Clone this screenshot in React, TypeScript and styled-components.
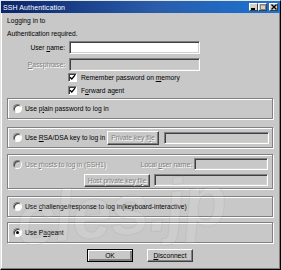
import styled, { createGlobalStyle, css } from 'styled-components';

const GlobalStyle = createGlobalStyle`
  body {
    margin: 0;
    background: #c8c8c8;
    font-family: "Liberation Sans", Arial, sans-serif;
  }
`;

const App = () => {
  return (
    <>
      <GlobalStyle />
      <Window>
        <TitleBar>
          <TitleText>SSH Authentication</TitleText>
          <TitleButtons>
            <CaptionButton>
              <svg width="5" height="5" viewBox="0 0 5 5">
                <rect x="0" y="3" width="4" height="2" fill="#000" />
              </svg>
            </CaptionButton>
            <CaptionButton $disabled>
              <svg width="6" height="6" viewBox="0 0 6 6">
                <rect x="0.5" y="0.5" width="5" height="5" fill="none" stroke="#808080" />
                <rect x="0" y="0" width="6" height="1.5" fill="#808080" />
              </svg>
            </CaptionButton>
            <CaptionButton $gap>
              <svg width="6" height="6" viewBox="0 0 6 6">
                <path d="M0.5 0.5 L5.5 5.5 M5.5 0.5 L0.5 5.5" stroke="#000" strokeWidth="1.4" />
              </svg>
            </CaptionButton>
          </TitleButtons>
        </TitleBar>

        <Content>
          <Line>Logging in to</Line>
          <Line>Authentication required.</Line>

          <FieldGrid>
            <FieldLabel>
              User <u>n</u>ame:
            </FieldLabel>
            <TextBox $width={131} $height={13} />
            <FieldLabel $disabled>
              <u>P</u>assphrase:
            </FieldLabel>
            <TextBox $width={131} $height={13} $disabled />
          </FieldGrid>

          <CheckRow>
            <CheckBox>
              <svg width="7" height="7" viewBox="0 0 7 7">
                <path d="M1 3.2 L2.8 5 L6 1.2" stroke="#000" strokeWidth="1.3" fill="none" />
              </svg>
            </CheckBox>
            <span>
              Remember password on <u>m</u>emory
            </span>
          </CheckRow>
          <CheckRow>
            <CheckBox>
              <svg width="7" height="7" viewBox="0 0 7 7">
                <path d="M1 3.2 L2.8 5 L6 1.2" stroke="#000" strokeWidth="1.3" fill="none" />
              </svg>
            </CheckBox>
            <span>
              F<u>o</u>rward agent
            </span>
          </CheckRow>

          <Group $mt={1} $h={21}>
            <RadioLabel>
              <Radio />
              <span>
                Use p<u>l</u>ain password to log in
              </span>
            </RadioLabel>
          </Group>

          <Group $mt={8} $h={21}>
            <RadioLabel>
              <Radio />
              <span>
                Use <u>R</u>SA/DSA key to log in
              </span>
            </RadioLabel>
            <PushButton $width={52} $height={14} $disabled>
              Private key fi<u>l</u>e
            </PushButton>
            <TextBox $width={105} $height={12} $disabled $ml={5} />
          </Group>

          <StackGroup $mt={6} $h={35}>
            <GroupRow>
              <RadioLabel $disabled>
                <Radio $disabled />
                <span>
                  Use <u>r</u>hosts to log in (SSH1)
                </span>
              </RadioLabel>
              <FieldLabel $disabled>
                Local <u>u</u>ser name:
              </FieldLabel>
              <TextBox $width={74} $height={12} $disabled $ml={2} />
            </GroupRow>
            <GroupRow $end>
              <PushButton $width={66} $height={13} $disabled>
                Host private key fi<u>l</u>e
              </PushButton>
              <TextBox $width={114} $height={12} $disabled $ml={4} />
            </GroupRow>
          </StackGroup>

          <Group $mt={7} $h={21}>
            <RadioLabel>
              <Radio />
              <span>
                Use <u>c</u>hallenge/response to log in(keyboard-interactive)
              </span>
            </RadioLabel>
          </Group>

          <Group $mt={5} $h={21}>
            <RadioLabel>
              <Radio $checked />
              <span>
                Use P<u>a</u>geant
              </span>
            </RadioLabel>
          </Group>

          <ButtonRow>
            <PushButton $width={46} $height={13} $default>
              OK
            </PushButton>
            <PushButton $width={46} $height={13}>
              <u>D</u>isconnect
            </PushButton>
          </ButtonRow>
        </Content>

        <Watermark>cles.jp</Watermark>
      </Window>
    </>
  );
};

const disabledText = css`
  color: #808080;
  text-shadow: 1px 1px 0 #ffffff;
`;

const Window = styled.div`
  position: relative;
  width: 281px;
  height: 270px;
  box-sizing: border-box;
  background: #c8c8c8;
  border: 1px solid;
  border-color: #e4e4e4 #000000 #000000 #e4e4e4;
  box-shadow: inset -1px -1px 0 #808080, inset 1px 1px 0 #ffffff;
  overflow: hidden;
  font-size: 6.7px;
  color: #000;
`;

const TitleBar = styled.div`
  height: 12px;
  margin: 0 0 0 0;
  padding: 0 2px 0 2px;
  display: flex;
  align-items: center;
  justify-content: space-between;
  background: linear-gradient(90deg, #0a246a 0%, #2a5caa 55%, #1a73d4 100%);
`;

const TitleText = styled.span`
  color: #ffffff;
  font-size: 7px;
  letter-spacing: 0.1px;
`;

const TitleButtons = styled.div`
  display: flex;
  align-items: center;
`;

const CaptionButton = styled.div<{ $gap?: boolean; $disabled?: boolean }>`
  width: 9px;
  height: 8px;
  box-sizing: border-box;
  display: flex;
  align-items: center;
  justify-content: center;
  background: #d4d0c8;
  border: 1px solid;
  border-color: #ffffff #404040 #404040 #ffffff;
  margin-left: ${({ $gap }) => ($gap ? '2px' : '0')};
`;

const Content = styled.div`
  padding: 1px 7px 0 6px;
`;

const Line = styled.div`
  height: 13px;
  line-height: 13px;
  white-space: nowrap;
`;

const FieldGrid = styled.div`
  display: grid;
  grid-template-columns: 58px auto;
  column-gap: 4px;
  row-gap: 4px;
  margin-top: 1px;
  align-items: center;
`;

const FieldLabel = styled.span<{ $disabled?: boolean }>`
  text-align: right;
  white-space: nowrap;
  ${({ $disabled }) => $disabled && disabledText}
`;

const TextBox = styled.div<{ $width: number; $height: number; $disabled?: boolean; $ml?: number }>`
  width: ${({ $width }) => $width}px;
  height: ${({ $height }) => $height}px;
  flex-shrink: 0;
  box-sizing: border-box;
  margin-left: ${({ $ml }) => $ml ?? 0}px;
  background: ${({ $disabled }) => ($disabled ? '#c8c8c8' : '#ffffff')};
  border: 1px solid;
  border-color: #808080 #ffffff #ffffff #808080;
  box-shadow: inset 1px 1px 0 #404040, inset -1px -1px 0 #d4d0c8;
`;

const CheckRow = styled.div`
  height: 13px;
  margin-left: 61px;
  display: flex;
  align-items: center;
  gap: 4px;
  white-space: nowrap;
  &:first-of-type {
    margin-top: 1px;
  }
`;

const CheckBox = styled.div`
  width: 9px;
  height: 9px;
  box-sizing: border-box;
  display: flex;
  align-items: center;
  justify-content: center;
  background: #ffffff;
  border: 1px solid;
  border-color: #808080 #ffffff #ffffff #808080;
  box-shadow: inset 1px 1px 0 #404040;
`;

const Group = styled.div<{ $mt: number; $h: number }>`
  margin-top: ${({ $mt }) => $mt}px;
  height: ${({ $h }) => $h}px;
  box-sizing: border-box;
  border: 1px solid #808080;
  box-shadow: inset 1px 1px 0 #ffffff, 1px 1px 0 #ffffff;
  display: flex;
  align-items: center;
  padding: 0 3px 0 5px;
  width: 266px;
`;

const StackGroup = styled(Group)`
  flex-direction: column;
  align-items: stretch;
  justify-content: flex-start;
  padding: 3px 4px 0 5px;
  gap: 4px;
`;

const GroupRow = styled.div<{ $end?: boolean }>`
  display: flex;
  align-items: center;
  height: 12px;
  justify-content: ${({ $end }) => ($end ? 'flex-end' : 'flex-start')};
`;

const RadioLabel = styled.label<{ $disabled?: boolean }>`
  flex: 1;
  display: flex;
  align-items: center;
  gap: 3px;
  white-space: nowrap;
  ${({ $disabled }) => $disabled && disabledText}
`;

const Radio = styled.span<{ $checked?: boolean; $disabled?: boolean }>`
  position: relative;
  width: 9px;
  height: 9px;
  flex-shrink: 0;
  box-sizing: border-box;
  border-radius: 50%;
  border: 1px solid;
  border-color: #808080 #ffffff #ffffff #808080;
  box-shadow: inset 1px 1px 0 #404040;
  background: ${({ $disabled }) => ($disabled ? '#c8c8c8' : '#ffffff')};
  ${({ $checked }) =>
    $checked &&
    css`
      &::after {
        content: '';
        position: absolute;
        left: 2px;
        top: 2px;
        width: 3px;
        height: 3px;
        border-radius: 50%;
        background: #000;
      }
    `}
`;

const PushButton = styled.div<{ $width: number; $height: number; $disabled?: boolean; $default?: boolean }>`
  width: ${({ $width }) => $width}px;
  height: ${({ $height }) => $height}px;
  flex-shrink: 0;
  box-sizing: border-box;
  display: flex;
  align-items: center;
  justify-content: center;
  white-space: nowrap;
  background: #c8c8c8;
  border: 1px solid;
  border-color: ${({ $default }) => ($default ? '#000000' : '#ffffff #404040 #404040 #ffffff')};
  box-shadow: ${({ $default }) =>
    $default
      ? 'inset 1px 1px 0 #ffffff, inset -2px -2px 0 #808080, inset -1px -1px 0 #404040'
      : 'inset -1px -1px 0 #808080'};
  ${({ $disabled }) => $disabled && disabledText}
`;

const ButtonRow = styled.div`
  margin-top: 6px;
  display: flex;
  justify-content: center;
  gap: 14px;
`;

const Watermark = styled.div`
  position: absolute;
  left: 14px;
  top: 168px;
  font-family: "Liberation Sans", Arial, sans-serif;
  font-size: 72px;
  font-weight: bold;
  font-style: italic;
  letter-spacing: -2px;
  color: rgba(255, 255, 255, 0.1);
  -webkit-text-stroke: 1px rgba(150, 150, 150, 0.18);
  transform: rotate(-6deg);
  pointer-events: none;
`;

export default App;
